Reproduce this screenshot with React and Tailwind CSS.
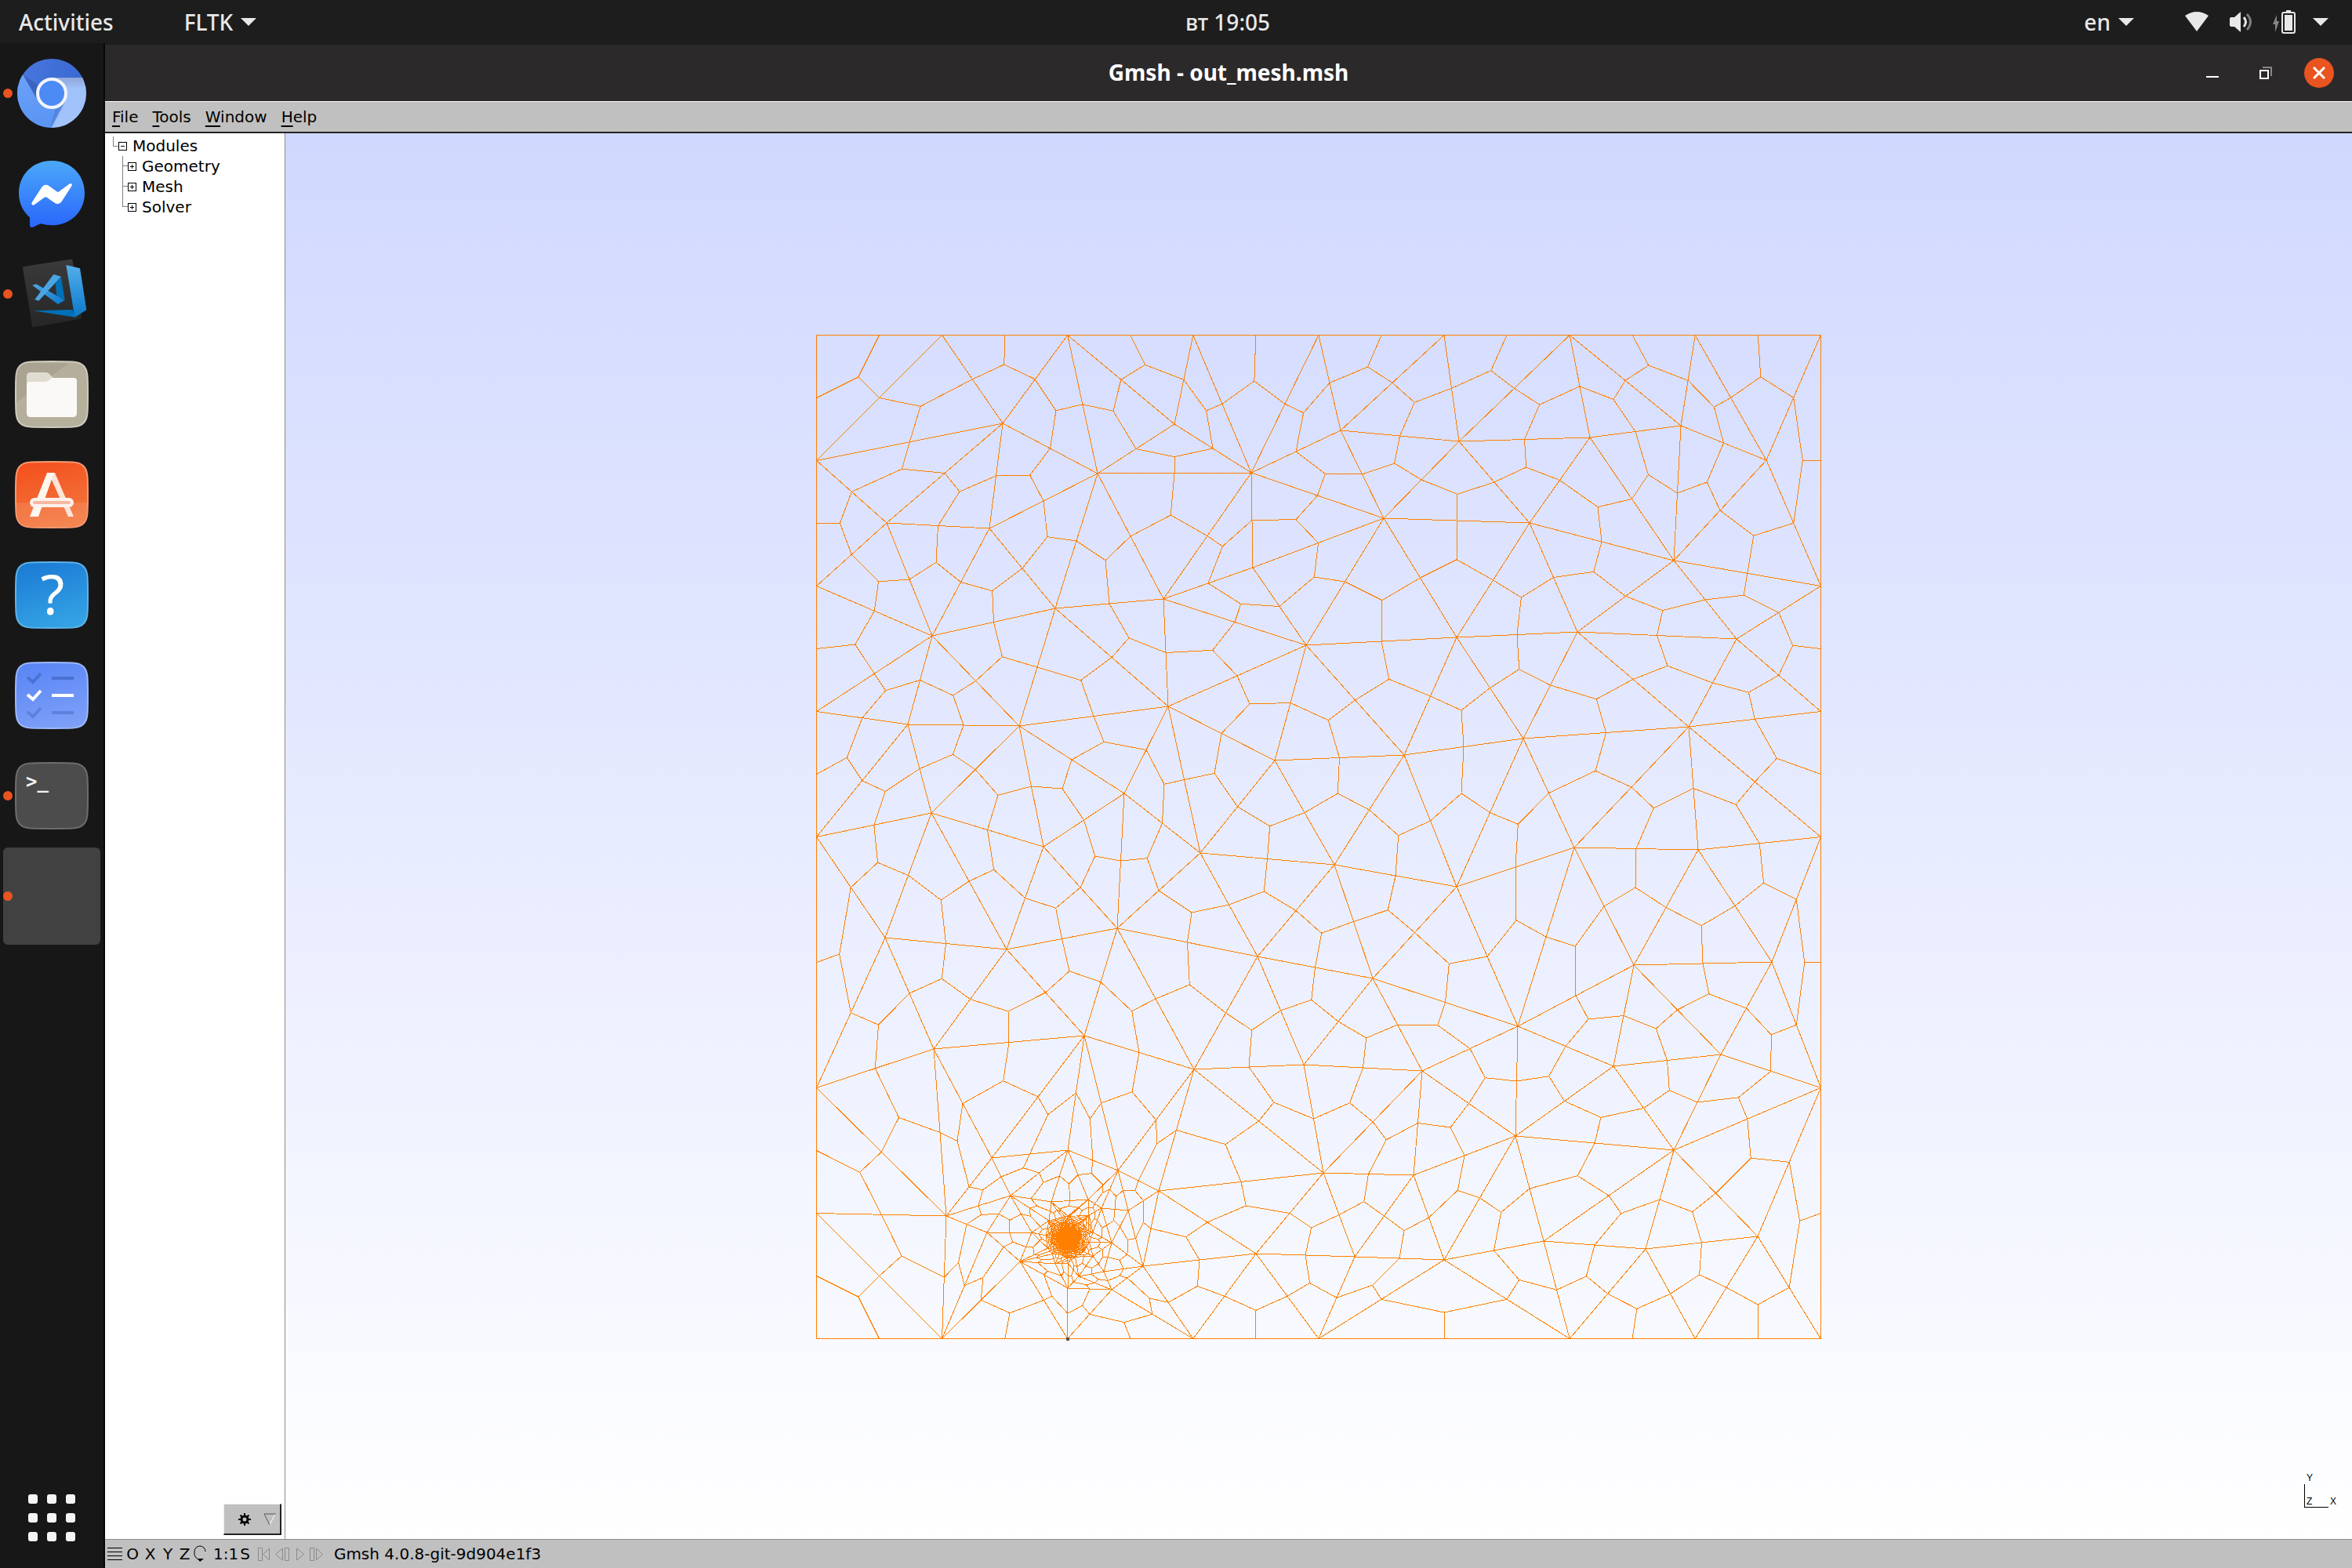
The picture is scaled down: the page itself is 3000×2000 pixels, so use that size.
import React from "react";

/* ---------- mesh ---------- */

const STEP = 160.1;
const LEFT = 1041.5;
const RIGHT = 2322.5;
const TOP = 426.5;
const BOTTOM = 1706.5;

const boundary = [
  ...[0, 1, 2, 3, 4, 5, 6, 7, 8].map((k) => [LEFT + STEP * k, TOP]),
  ...[0, 1, 2, 3, 4, 6, 7, 8].map((k) => [LEFT + STEP * k, BOTTOM]),
  ...[586, 746, 906, 1066, 1386, 1546].map((y) => [LEFT, y + 0.5]),
  ...[746, 906, 1066, 1386].map((y) => [RIGHT, y + 0.5]),
];

const interior = [
  [1279, 539], [1400, 603], [1596, 602], [1498, 540], [1131, 666], [1262, 673],
  [1346, 775], [1484, 763], [1189, 810], [1666, 822], [1598, 723], [1710, 548],
  [1861, 562], [2028, 557], [2144, 542], [2253, 586], [1765, 660], [1951, 666],
  [2135, 714], [1858, 812], [2012, 805], [2215, 814], [1158, 923], [1300, 925],
  [1490, 900], [1626, 969], [1188, 1036], [1434, 1011], [1331, 1079], [1531, 1087],
  [1129, 1195], [1284, 1210], [1425, 1183], [1604, 1219], [1791, 962], [1943, 941],
  [2154, 926], [1702, 1102], [1858, 1130], [2008, 1080], [2166, 1083], [1751, 1247],
  [2084, 1230], [2260, 1226], [1191, 1337], [1383, 1320], [1523, 1363], [1663, 1357],
  [1265, 1476], [1362, 1466], [1426, 1492], [1478, 1518], [1289, 1524], [1207, 1550],
  [1259, 1571], [1316, 1571], [1301, 1608], [1341, 1532], [1388, 1529], [1439, 1543],
  [1418, 1584], [1458, 1614], [1602, 1598], [1418, 1644], [1362, 1642], [1408, 1621],
  [1376, 1627], [1936, 1308], [1814, 1365], [2058, 1359], [2195, 1344], [1688, 1495],
  [1803, 1498], [1933, 1448], [2135, 1466], [1728, 1602], [1842, 1606], [1969, 1582],
  [2099, 1592], [2242, 1576], [1389, 1549], [1405, 1540], [1394, 1601], [1346, 1611],
  [1362, 1610], [1338, 1556], [1394, 1571], [1362, 1550],
];

const HUB = [1362, 1578.5];

function noise(seed) {
  const v = Math.sin(seed * 127.1 + 11.7) * 43758.5453;
  return v - Math.floor(v);
}

const rings = [[27, 12], [23, 17], [19, 22], [16, 25], [13, 24], [10, 22], [8, 20], [6, 16], [4, 12], [2, 6]];
const refined = [HUB];
rings.forEach(([radius, count], ring) => {
  for (let k = 0; k < count; k += 1) {
    const seed = ring * 31 + k;
    const angle = ((k + noise(seed) * 0.5 + ring * 0.4) / count) * Math.PI * 2;
    const r = radius * (0.94 + noise(seed + 500) * 0.12);
    refined.push([HUB[0] + Math.cos(angle) * r, HUB[1] + Math.sin(angle) * r]);
  }
});

function circumcircle(a, b, c) {
  const d = 2 * (a[0] * (b[1] - c[1]) + b[0] * (c[1] - a[1]) + c[0] * (a[1] - b[1]));
  const a2 = a[0] * a[0] + a[1] * a[1];
  const b2 = b[0] * b[0] + b[1] * b[1];
  const c2 = c[0] * c[0] + c[1] * c[1];
  const x = (a2 * (b[1] - c[1]) + b2 * (c[1] - a[1]) + c2 * (a[1] - b[1])) / d;
  const y = (a2 * (c[0] - b[0]) + b2 * (a[0] - c[0]) + c2 * (b[0] - a[0])) / d;
  return { x, y, r2: (a[0] - x) ** 2 + (a[1] - y) ** 2 };
}

function triangulate(input) {
  const pts = input.map(([x, y]) => [x - 1682, y - 1066]);
  const n = pts.length;
  pts.push([-90000, -70000], [90000, -70000], [0, 110000]);
  const make = (i, j, k) => ({ v: [i, j, k], c: circumcircle(pts[i], pts[j], pts[k]) });
  let tris = [make(n, n + 1, n + 2)];
  for (let i = 0; i < n; i += 1) {
    const [px, py] = pts[i];
    const open = new Map();
    const kept = [];
    tris.forEach((t) => {
      if ((px - t.c.x) ** 2 + (py - t.c.y) ** 2 < t.c.r2) {
        [[0, 1], [1, 2], [2, 0]].forEach(([s, e]) => {
          const a = t.v[s];
          const b = t.v[e];
          const key = a < b ? `${a}-${b}` : `${b}-${a}`;
          if (open.has(key)) open.delete(key);
          else open.set(key, [a, b]);
        });
      } else kept.push(t);
    });
    open.forEach(([a, b]) => {
      const cross = (pts[b][0] - pts[a][0]) * (py - pts[a][1]) - (pts[b][1] - pts[a][1]) * (px - pts[a][0]);
      if (Math.abs(cross) > 1e-6) kept.push(make(a, b, i));
    });
    tris = kept;
  }
  return tris.map((t) => t.v).filter((v) => v.every((k) => k < n));
}

/* Each triangle is split into three quads: its sides plus centroid-to-midpoint spokes. */
function meshPath() {
  const pts = [...interior, ...refined, ...boundary];
  const seen = new Set();
  const out = [];
  const f = (v) => v.toFixed(1);
  triangulate(pts).forEach((v) => {
    const [a, b, c] = v.map((k) => pts[k]);
    const gx = (a[0] + b[0] + c[0]) / 3;
    const gy = (a[1] + b[1] + c[1]) / 3;
    [[0, 1], [1, 2], [2, 0]].forEach(([s, e]) => {
      const p = pts[v[s]];
      const q = pts[v[e]];
      const key = [v[s], v[e]].sort((m, k) => m - k).join("-");
      if (!seen.has(key)) {
        seen.add(key);
        out.push(`M${f(p[0])} ${f(p[1])}L${f(q[0])} ${f(q[1])}`);
      }
      out.push(`M${f(gx)} ${f(gy)}L${f((p[0] + q[0]) / 2)} ${f((p[1] + q[1]) / 2)}`);
    });
  });
  return out.join("");
}

const MESH = meshPath();

function MeshView() {
  return (
    <main className="relative flex min-w-0 flex-1 items-center justify-center bg-linear-to-b from-[#d0d8ff] to-white">
      <svg className="w-[1282px] h-[1282px] overflow-visible" viewBox="1041 425 1282 1282" shapeRendering="crispEdges" role="img" aria-label="Mesh">
        <path d={MESH} fill="none" stroke="#ff8000" strokeWidth="1" />
        <rect x="1041.5" y="426.5" width="1281" height="1280" fill="none" stroke="#ff8000" />
        <circle cx="1362" cy="1578.5" r="15" fill="#ff8000" />
        <rect x="1360" y="1705" width="4" height="4" fill="#555" />
      </svg>
      <svg className="absolute right-0 bottom-0 h-[104px] w-[100px]" viewBox="0 0 100 104" aria-hidden="true">
        <path d="M39.500 34V63.500H70" fill="none" stroke="#000" shapeRendering="crispEdges" />
        <g fontSize="12" fontFamily="Liberation Sans, sans-serif" fill="#000">
          <text x="42" y="30">Y</text>
          <text x="42" y="60">Z</text>
          <text x="72" y="60">X</text>
        </g>
      </svg>
    </main>
  );
}

/* ---------- dock ---------- */

const icon = "h-24 w-24 overflow-visible";

function Chromium() {
  return (
    <svg className={icon} viewBox="54 213 288 288" aria-hidden="true">
      <defs>
        <linearGradient id="chTop" x1="0" y1="0" x2="1" y2="0.3">
          <stop offset="0" stopColor="#4a78dd" /><stop offset="1" stopColor="#3767d2" />
        </linearGradient>
        <linearGradient id="chLeft" x1="0" y1="0" x2="0.3" y2="1">
          <stop offset="0" stopColor="#6ba1f8" /><stop offset="1" stopColor="#5a95f3" />
        </linearGradient>
        <linearGradient id="chRight" x1="0" y1="0" x2="0" y2="1">
          <stop offset="0" stopColor="#8fa6d8" /><stop offset="0.2" stopColor="#a0c1f9" /><stop offset="1" stopColor="#a3c4fa" />
        </linearGradient>
        <clipPath id="chClip"><circle cx="198" cy="357" r="132" /></clipPath>
      </defs>
      <g clipPath="url(#chClip)">
        <rect x="60" y="220" width="280" height="280" fill="url(#chTop)" />
        <path d="M88 286L60 300V500H194L250 387L146 387Z" fill="url(#chLeft)" />
        <path d="M88 286L140 376L152 330Z" fill="#3c63c0" />
        <path d="M198 297H340V500H192L250 387Z" fill="url(#chRight)" />
        <path d="M246 390L192 489L212 417Z" fill="#5584dc" />
      </g>
      <circle cx="198" cy="357" r="54" fill="#4c8bf5" stroke="#f3f4fa" strokeWidth="12" />
    </svg>
  );
}

function Messenger() {
  return (
    <svg className={icon} viewBox="54 597 288 288" aria-hidden="true">
      <defs>
        <linearGradient id="msg" x1="0" y1="0" x2="0" y2="1">
          <stop offset="0" stopColor="#4ba8f9" /><stop offset="1" stopColor="#2a66fb" />
        </linearGradient>
      </defs>
      <path d="M198 615C270 615 324 668 324 739C324 810 270 862 198 862C183 862 169 860 157 856C146 859 134 867 124 870C118 871 114 868 114 862V832C88 809 72 777 72 739C72 668 126 615 198 615Z" fill="url(#msg)" />
      <path d="M121 776L160 716Q171 702 187 711L217 733Q221 736 226 733L265 704Q277 698 275 710L236 771Q225 786 210 777L179 755Q175 752 170 755L131 784Q120 789 121 776Z" fill="#fff" />
    </svg>
  );
}

function VSCode() {
  return (
    <svg className={icon} viewBox="54 981 288 288" aria-hidden="true">
      <defs>
        <linearGradient id="vsTile" x1="0" y1="0" x2="0" y2="1">
          <stop offset="0" stopColor="#3c3a3c" /><stop offset="1" stopColor="#262626" />
        </linearGradient>
        <linearGradient id="vsRib" x1="0" y1="0" x2="0" y2="1">
          <stop offset="0" stopColor="#54aeea" /><stop offset="1" stopColor="#0a79cb" />
        </linearGradient>
        <linearGradient id="vsBand" x1="0" y1="0" x2="1" y2="1">
          <stop offset="0" stopColor="#4ba6e6" /><stop offset="1" stopColor="#0a79cb" />
        </linearGradient>
      </defs>
      <path d="M90 1020L270 992Q277 991 278 998L312 1214Q312 1219 307 1220L130 1252Q124 1253 123 1247L87 1026Q86 1021 90 1020Z" fill="url(#vsTile)" />
      <path d="M128 1189L278 1185L288 1214Z" fill="#0070b8" />
      <path d="M253 1014L306 1027L331 1186L286 1214Z" fill="url(#vsRib)" />
      <path d="M124 1092L138 1087L248 1148L222 1164Z" fill="url(#vsBand)" />
      <path d="M234 1058L248 1148L217 1131L212 1084Z" fill="#0070b8" />
      <path d="M133 1146L205 1050L234 1058L148 1151Z" fill="#4aa5e5" />
    </svg>
  );
}

function Tile({ id, from, to, rim, children }) {
  return (
    <svg className={icon} viewBox="0 0 96 96" aria-hidden="true">
      <defs>
        <linearGradient id={id} x1="0.3" y1="0" x2="0.6" y2="1">
          <stop offset="0" stopColor={from} /><stop offset="1" stopColor={to} />
        </linearGradient>
      </defs>
      <path d="M48 6C76 6 83 6 88 11C94 16 94 24 94 48C94 72 94 80 88 85C83 90 76 90 48 90C20 90 13 90 8 85C2 80 2 72 2 48C2 24 2 16 8 11C13 6 20 6 48 6Z" fill={`url(#${id})`} stroke={rim} strokeWidth="2" />
      {children}
    </svg>
  );
}

function Files() {
  return (
    <Tile id="tFiles" from="#b5ae9c" to="#b5b09c" rim="#cfccbf">
      <path d="M3 58L70 8H20Q4 8 3 26Z" fill="#aaa392" />
      <path d="M16 40V25Q16 20 21 20H41Q43 20 45 22L50 27H60V40Z" fill="#e0dcd0" />
      <path d="M16 36Q16 32 20 32H40Q42 32 43 31L47 28Q48 27 50 27H76Q80 27 80 31V72Q80 77 75 77H21Q16 77 16 72Z" fill="#faf9f7" />
    </Tile>
  );
}

function Software() {
  return (
    <Tile id="tSoft" from="#f4511e" to="#f2793f" rim="#f79a72">
      <path d="M3 58H93Q93 78 87 84Q82 89 60 89H36Q14 89 9 84Q3 78 3 58Z" fill="#fff" fillOpacity="0.1" />
      <path d="M46 20H52L76 76H69L47 27Z" fill="#fde3d8" />
      <path d="M42 20H51L31 76H20Z" fill="#fff8f0" />
      <rect x="20" y="52" width="56" height="12" rx="6" fill="#fdf1ec" />
      <rect x="24" y="56" width="48" height="4" rx="2" fill="#f9b8a0" />
    </Tile>
  );
}

function Help() {
  return (
    <Tile id="tHelp" from="#1c7cd5" to="#34a3e4" rim="#5fb3ea">
      <text x="49" y="73" textAnchor="middle" fontSize="70" fontFamily="Noto Sans, sans-serif" fill="#fff">?</text>
    </Tile>
  );
}

function Todo() {
  return (
    <Tile id="tTodo" from="#5a86f5" to="#7d9ff8" rim="#9db8fa">
      <g fill="none" strokeWidth="4">
        <path d="M17 25L24 31L34 20M48 26H76" stroke="#4a72d2" />
        <path d="M17 69L24 75L34 64M48 70H76" stroke="#5d82dc" />
        <path d="M17 47L24 53L34 42M48 48H76" stroke="#fff" />
      </g>
    </Tile>
  );
}

function Terminal() {
  return (
    <Tile id="tTerm" from="#4c4c4c" to="#4c4c4c" rim="#6e6e6e">
      <text x="15" y="38" fontSize="24" fontWeight="700" fontFamily="DejaVu Sans Mono, monospace" fill="#f2f2f2">&gt;_</text>
    </Tile>
  );
}

const dockApps = [
  { name: "Chromium", Icon: Chromium, running: true },
  { name: "Messenger", Icon: Messenger },
  { name: "Visual Studio Code", Icon: VSCode, running: true },
  { name: "Files", Icon: Files },
  { name: "Software", Icon: Software },
  { name: "Help", Icon: Help },
  { name: "To Do", Icon: Todo },
  { name: "Terminal", Icon: Terminal, running: true },
  { name: "Gmsh", running: true, active: true },
];

function Dock() {
  return (
    <nav className="flex w-[134px] shrink-0 flex-col border-r-2 border-[#080808] bg-[#171717]" aria-label="Dock">
      {dockApps.map(({ name, Icon, running, active }) => (
        <button key={name} aria-label={name} className="relative flex h-32 items-center justify-center">
          {active && <span className="h-[124px] w-[124px] rounded-md bg-[#414141]" />}
          {Icon && <Icon />}
          {running && <span className="absolute left-1 h-3 w-3 rounded-full bg-[#e95420]" />}
        </button>
      ))}
      <button aria-label="Show Applications" className="mt-auto flex h-32 items-center justify-center">
        <span className="grid grid-cols-3 gap-3">
          {Array.from({ length: 9 }, (_, k) => (
            <span key={k} className="h-3 w-3 rounded-[3px] bg-[#f5f5f5]" />
          ))}
        </span>
      </button>
    </nav>
  );
}

/* ---------- panels ---------- */

function Caret() {
  return (
    <svg className="h-[10px] w-5" viewBox="0 0 20 10" aria-hidden="true">
      <path d="M0 0H20L10 10Z" fill="#e8e8e8" />
    </svg>
  );
}

function TopPanel() {
  return (
    <header className="flex h-[55px] shrink-0 items-center bg-[#1d1d1d] pr-[30px] pl-6 font-['Noto_Sans',sans-serif] text-[28px] font-medium text-[#e8e8e8]">
      <div className="flex flex-1 items-center gap-[90px]">
        <button>Activities</button>
        <button className="flex items-center gap-[10px]">FLTK <Caret /></button>
      </div>
      <button className="pl-[138px]">вт 19:05</button>
      <div className="flex flex-1 items-center justify-end">
        <button className="mr-[65px] flex items-center gap-[10px]">en <Caret /></button>
        <button aria-label="System menu" className="flex items-center">
          <svg className="h-[25px] w-[30px]" viewBox="0 0 30 25" aria-hidden="true">
            <path d="M0 5Q15 -5 30 5L15 25Z" fill="#e8e8e8" />
          </svg>
          <svg className="ml-[27px] h-[26px] w-7" viewBox="0 0 28 26" aria-hidden="true">
            <path d="M0 9Q0 7 2 7H6L14 0V26L6 19H2Q0 19 0 17Z" fill="#e8e8e8" />
            <path d="M18 7Q23 13 18 19" fill="none" stroke="#e8e8e8" strokeWidth="3" />
            <path d="M22 3Q31 13 22 23" fill="none" stroke="#7d7d7d" strokeWidth="3" />
          </svg>
          <svg className="ml-[27px] h-[30px] w-[29px]" viewBox="0 0 29 30" aria-hidden="true">
            <path d="M5 6L0 18H3V28L8 14H5Z" fill="#858585" />
            <path d="M17 0H23V3H17Z" fill="#e8e8e8" />
            <rect x="12" y="3" width="16" height="26" rx="2" fill="none" stroke="#e8e8e8" strokeWidth="2" />
            <rect x="15" y="6" width="10" height="20" fill="#e8e8e8" />
          </svg>
          <span className="ml-[22px]"><Caret /></span>
        </button>
      </div>
    </header>
  );
}

function TitleBar() {
  return (
    <div className="flex h-[74px] items-center border-t-2 border-[#1b1b1b] bg-[#2c292a] px-[23px]">
      <div className="flex-1" />
      <h1 className="font-['Noto_Sans',sans-serif] text-[28px] font-bold text-white">Gmsh - out_mesh.msh</h1>
      <div className="flex flex-1 items-center justify-end">
        <button aria-label="Minimize" className="mr-[52px]">
          <svg className="h-4 w-4" viewBox="0 0 16 16" aria-hidden="true"><path d="M0 12H16V14H0Z" fill="#fff" /></svg>
        </button>
        <button aria-label="Restore" className="mr-[41px]">
          <svg className="h-4 w-4" viewBox="0 0 16 16" shapeRendering="crispEdges" aria-hidden="true">
            <path d="M4 1H15V12" fill="none" stroke="#8a8889" strokeWidth="2" />
            <rect x="1" y="5" width="10" height="10" fill="none" stroke="#fff" strokeWidth="2" />
          </svg>
        </button>
        <button aria-label="Close" className="flex h-[38px] w-[38px] items-center justify-center rounded-full bg-[#e95420]">
          <svg className="h-4 w-4" viewBox="0 0 16 16" aria-hidden="true"><path d="M1 1L15 15M15 1L1 15" stroke="#fff" strokeWidth="3" /></svg>
        </button>
      </div>
    </div>
  );
}

function MenuBar() {
  return (
    <div className="flex h-[41px] items-center border-t border-b-2 border-t-white border-b-[#222] bg-[#c0c0c0]" role="menubar">
      {["File", "Tools", "Window", "Help"].map((label) => (
        <button key={label} role="menuitem" className="px-[9px]">
          <span className="underline underline-offset-4">{label[0]}</span>{label.slice(1)}
        </button>
      ))}
    </div>
  );
}

function Toggle({ open }) {
  return (
    <svg className="h-[11px] w-[11px] shrink-0" viewBox="0 0 11 11" shapeRendering="crispEdges" aria-hidden="true">
      <rect x="0.500" y="0.500" width="10" height="10" fill="#fff" stroke="#000" />
      <path d={open ? "M3 5.500H8" : "M3 5.500H8M5.500 3V8"} stroke="#000" />
    </svg>
  );
}

function ModuleTree() {
  const children = ["Geometry", "Mesh", "Solver"];
  return (
    <aside className="flex w-[230px] shrink-0 flex-col border-r border-[#8c8c8c] bg-white">
      <ul className="pt-[3px] pl-[10px] leading-[26px]">
        <li>
          <button className="flex items-center">
            <span className="mb-3 h-[13px] w-[7px] border-b border-l border-[#808080]" />
            <Toggle open />
            <span className="pl-[7px]">Modules</span>
          </button>
          <ul className="pl-3">
            {children.map((name, k) => (
              <li key={name} className="flex">
                <span className="flex w-[7px] flex-col">
                  <span className="h-[13px] border-b border-l border-[#808080]" />
                  {k < children.length - 1 && <span className="flex-1 border-l border-[#808080]" />}
                </span>
                <button className="flex items-center">
                  <Toggle />
                  <span className="pl-[7px]">{name}</span>
                </button>
              </li>
            ))}
          </ul>
        </li>
      </ul>
      <button aria-label="Options" className="mt-auto mr-1 mb-[5px] flex h-10 w-[74px] items-center self-end border-t border-r-2 border-b-2 border-l border-t-[#eee] border-r-[#222] border-b-[#222] border-l-[#eee] bg-[#c0c0c0]">
        <svg className="ml-[18px] h-4 w-4" viewBox="0 0 16 16" aria-hidden="true">
          <circle cx="8" cy="8" r="4" fill="none" stroke="#000" strokeWidth="3" />
          <path d="M8 0V3M8 13V16M0 8H3M13 8H16M2.500 2.500L4.500 4.500M11.500 11.500L13.500 13.500M13.500 2.500L11.500 4.500M2.500 13.500L4.500 11.500" stroke="#000" strokeWidth="2" />
        </svg>
        <svg className="ml-4 h-4 w-4" viewBox="0 0 16 16" aria-hidden="true">
          <path d="M15 1L8 15" stroke="#fff" />
          <path d="M8 15L1 1H16" fill="none" stroke="#555" />
        </svg>
      </button>
    </aside>
  );
}

function StatusBar() {
  return (
    <footer className="flex h-[37px] shrink-0 items-center border-t border-[#8c8c8c] bg-[#c0c0c0] pl-[3px]">
      <button aria-label="Display options">
        <svg className="h-[18px] w-[19px]" viewBox="0 0 19 18" shapeRendering="crispEdges" aria-hidden="true">
          <path d="M0 1.500H19M0 6.500H19M0 11.500H19M0 16.500H19" stroke="#000" />
        </svg>
      </button>
      <button className="ml-0.5 w-[22px]">O</button>
      <button className="w-[23px]">X</button>
      <button className="w-[22px]">Y</button>
      <button className="w-[21px]">Z</button>
      <button aria-label="Rotate">
        <svg className="h-6 w-5" viewBox="0 0 20 24" aria-hidden="true">
          <path d="M7 19Q1 16 2 9A7 7 0 0 1 16 9" fill="none" stroke="#000" />
          <path d="M6 18L14 18L9 22Z" fill="#000" />
        </svg>
      </button>
      <button className="ml-[6px]">1:1</button>
      <button className="ml-0.5">S</button>
      <svg className="ml-[10px] h-[17px] w-[83px]" viewBox="0 0 83 17" aria-hidden="true">
        <g fill="none" stroke="#8a8a8a">
          <path d="M0.500 0.500H5.500V16.500H0.500ZM14.500 1V16L6.500 8.500Z" />
          <path d="M31.500 1V16L22.500 8.500ZM34.500 0.500H39.500V16.500H34.500Z" />
          <path d="M49.500 1V16L58.500 8.500Z" />
          <path d="M66.500 0.500H71.500V16.500H66.500ZM74.500 1V16L82.500 8.500Z" />
        </g>
      </svg>
      <span className="pl-[14px]">Gmsh 4.0.8-git-9d904e1f3</span>
    </footer>
  );
}

export default function App() {
  return (
    <div className="flex h-screen flex-col overflow-hidden bg-[#171717]">
      <TopPanel />
      <div className="flex min-h-0 flex-1">
        <Dock />
        <section className="flex min-w-0 flex-1 flex-col font-['DejaVu_Sans',sans-serif] text-xl text-black">
          <TitleBar />
          <MenuBar />
          <div className="flex min-h-0 flex-1">
            <ModuleTree />
            <MeshView />
          </div>
          <StatusBar />
        </section>
      </div>
    </div>
  );
}
